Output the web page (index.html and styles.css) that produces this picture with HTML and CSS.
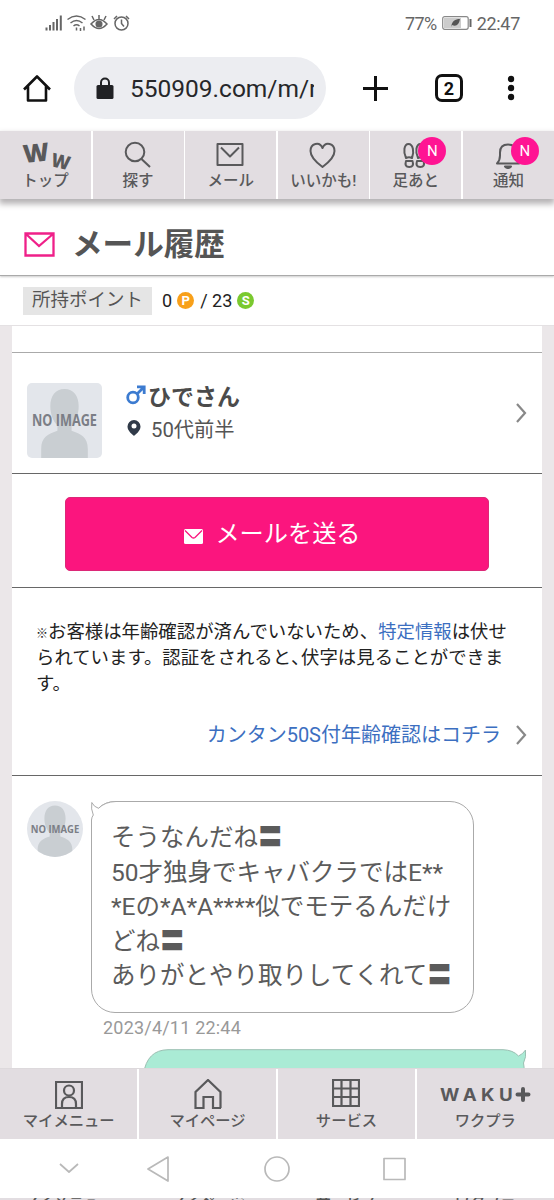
FILE: index.html
```html
<!DOCTYPE html>
<html lang="ja">
<head>
<meta charset="utf-8">
<title>メール履歴</title>
<link rel="stylesheet" href="styles.css">
</head>
<body>
<svg width="0" height="0" class="defs">
  <symbol id="person" viewBox="0 0 74 74">
    <rect width="74" height="74" fill="#e3e6eb"/>
    <path d="M37 6c-9 0-14 7-14 17 0 8 3 15 7 19v5c-9 3-16 6-16 18v9h46v-9c0-12-7-15-16-18v-5c4-4 7-11 7-19 0-10-5-17-14-17z" fill="#c9ced2"/>
    <text x="5" y="42" textLength="64" lengthAdjust="spacingAndGlyphs" class="no-image">NO IMAGE</text>
  </symbol>
</svg>
<div class="phone">
  <header class="status">
    <svg class="signals" width="86" height="18" viewBox="0 0 86 18" fill="none" stroke="#666" stroke-width="1.5">
      <path d="M1.500 13.500v3M5 11v5.500M8.500 8v8.500M12 5v11.500M15.800 1.500v15" stroke-width="2"/>
      <path d="M22.500 5.500q9-7 18 0M25.500 9q6-5 12 0M28.500 12q3-2.500 6 0"/><path d="M31.500 13.500v3M35.500 14v3M39 12.500v4"/>
      <path d="M46 10q8-9 16 0-8 9-16 0zM54 5V1M49 6l-2-4M59 6l2-4"/><circle cx="54" cy="10" r="2.800" fill="#666"/>
      <circle cx="76.500" cy="9.500" r="6.500"/><path d="M76.500 5.500v4l2.500 3M69 5l3-3M84 5l-3-3"/>
    </svg>
    <div class="power"><span class="percent">77%</span>
      <svg width="30" height="14" viewBox="0 0 30 14"><rect x=".7" y=".7" width="25.500" height="12.600" rx="2" fill="#fff" stroke="#888" stroke-width="1.200"/><path d="M2 2h17v10H2z" fill="#ccc"/><path d="M9 11c1-6 4-8 9-8-1 6-4 8-8 6z" fill="#555"/><path d="M28.500 3v8" stroke="#666" stroke-width="2"/></svg>
      <span class="clock">22:47</span></div>
  </header>
  <div class="browser">
    <svg class="home" width="28" height="28" viewBox="0 0 28 28" fill="none" stroke="#111" stroke-width="2.600" stroke-linejoin="round"><path d="M1 15.500L14 2.500 27 15.500M5 12v14.500h18V12"/></svg>
    <div class="address">
      <svg width="18" height="23" viewBox="0 0 18 23"><rect x=".5" y="8" width="17" height="14" rx="1.500" fill="#202124"/><path d="M5 9V5.500a4 4 0 0 1 8 0V9" fill="none" stroke="#202124" stroke-width="2"/></svg>
      <span class="url">550909.com/m/r</span>
    </div>
    <svg class="plus" width="25" height="25" viewBox="0 0 25 25" stroke="#111" stroke-width="3"><path d="M12.500 0v25M0 12.500h25"/></svg>
    <div class="count">2</div>
    <svg class="dots" width="8" height="26" viewBox="0 0 8 26" fill="#111"><circle cx="4" cy="4" r="3.200"/><circle cx="4" cy="13" r="3.200"/><circle cx="4" cy="22" r="3.200"/></svg>
  </div>
  <nav class="tabs">
    <div class="tab"><svg class="ww" viewBox="0 0 50 29"><text transform="translate(3 23) rotate(-6)" font-size="25" textLength="26" lengthAdjust="spacingAndGlyphs">W</text><text transform="translate(29 26) rotate(13)" font-size="19" textLength="19" lengthAdjust="spacingAndGlyphs">W</text></svg><span class="w-top">トップ</span></div>
    <div class="tab"><svg viewBox="0 0 50 29"><circle cx="22" cy="12" r="9.300"/><path d="M28.500 19l8.500 8"/></svg><span>探す</span></div>
    <div class="tab"><svg viewBox="0 0 50 29"><rect x="11.500" y="4" width="25" height="21"/><path d="M15 7.500l9 9 9-9"/></svg><span class="w-mail">メール</span></div>
    <div class="tab"><svg viewBox="0 0 50 29"><path d="M24.500 27C15 20 12.500 15.500 12.500 11c0-7.500 9-10 12-3 3-7 12-4.500 12 3 0 4.500-2.500 9-12 16z"/></svg><span class="w-like">いいかも!</span></div>
    <div class="tab"><svg viewBox="0 0 50 29"><path d="M15 18c-3-6-2-14 2.500-14s6 8 3.500 14q-3-1.500-6 0zM27 18c-3-6-2-14 2.500-14s6 8 3.500 14q-3-1.500-6 0zM15 21h6.500q2 6-3.200 6t-3.300-6zM26 21h6.500q2 6-3.200 6t-3.300-6z"/></svg><span>足あと</span><b class="badge">N</b></div>
    <div class="tab"><svg viewBox="0 0 50 29"><path d="M14 23.500q3-3 3-8v-3q0-8 8-8t8 8v3q0 5 3 8z"/><path d="M22 26.500h6q-3 3-6 0z" fill="#59595b"/></svg><span>通知</span><b class="badge">N</b></div>
  </nav>
  <div class="title">
    <svg width="31" height="25" viewBox="0 0 31 25" fill="none" stroke="#ef2089" stroke-width="2.300"><path d="M1.500 1.500h28v22h-28zM2 2l13 12L29 2"/></svg>
    <h1>メール履歴</h1>
  </div>
  <div class="points"><span class="tag">所持ポイント</span><span>0</span><b class="coin">P</b><span>/ 23</span><b class="coin green">S</b></div>
  <main class="page">
    <div class="sheet">
      <div class="lead"></div>
      <section class="profile">
        <svg class="avatar" viewBox="0 0 74 74"><use href="#person"/></svg>
        <div class="who">
          <div class="name"><svg width="20" height="20" viewBox="0 0 20 20" fill="none" stroke="#3c7bd0" stroke-width="2.800"><circle cx="7" cy="12.500" r="5.300"/><path d="M11 9l7-7M11 1.800h7.200V9"/></svg><strong>ひでさん</strong></div>
          <div class="age"><svg width="16" height="18" viewBox="0 0 15 18"><path d="M7.500 1a6.500 6.500 0 0 1 6.500 6.500C14 12 9 15.500 7.500 17 6 15.500 1 12 1 7.500A6.500 6.500 0 0 1 7.500 1z" fill="#303a49"/><circle cx="7.500" cy="7" r="2.500" fill="#fff"/></svg><span>50代前半</span></div>
        </div>
        <svg class="chevron" viewBox="0 0 12 20"><path d="M2 1l8 9-8 9"/></svg>
      </section>
      <section class="send"><div class="button"><svg width="19" height="15" viewBox="0 0 19 15"><rect width="19" height="15" rx="1.500" fill="#fff"/><path d="M1 1.500l7 7q1.500 1 3 0l7-7" fill="none" stroke="#fb157e" stroke-width="1.300"/></svg><span>メールを送る</span></div></section>
      <section class="notice">
        <p><span class="mark">※</span>お客様は年齢確認が済んでいないため、<a>特定情報</a>は伏せ<br>られています。認証をされると<span class="comma">、</span>伏字は見ることができま<br>す。</p>
        <div class="verify"><a>カンタン50S付年齢確認はコチラ</a><svg class="chevron" viewBox="0 0 12 20"><path d="M2 1l8 9-8 9"/></svg></div>
      </section>
      <section class="chat">
        <svg class="face" viewBox="0 0 74 74"><use href="#person"/></svg>
        <div class="message">
          <div class="bubble"><svg class="tail" width="26" height="27" viewBox="0 0 26 27"><path d="M.5 26V19Q.7 16 2.300 14Q-.3 8 .8 1.500 3 6 7.500 7.300 14 .8 25 .5" fill="#fff" stroke="#aaa"/></svg>そうなんだね〓<br>50才独身でキャバクラではE**<br>*Eの*A*A****似でモテるんだけ<br>どね〓<br>ありがとやり取りしてくれて〓</div>
          <div class="date">2023/4/11 22:44</div>
        </div>
      </section>
      <svg class="reply" viewBox="0 0 384 22"><path d="M.5 25Q4 1 25 .7H360Q370 1 375.500 7 380 5 382.500 1 383.500 8 380.500 14 381 18 382 25" fill="#aaebd5" stroke="#9bbfb2"/></svg>
    </div>
  </main>
  <nav class="bottom">
    <div class="item"><svg viewBox="0 0 28 31"><path d="M1 3h26v26H1z"/><circle cx="14" cy="11.500" r="5"/><path d="M7 29v-4q0-7 7-7t7 7v4"/></svg><span class="w-menu">マイメニュー</span></div>
    <div class="item"><svg viewBox="0 0 28 31"><path d="M27 29h-8V18H9.500v11H1.500V13L14 1l12.500 12v16"/></svg><span class="w-page">マイページ</span></div>
    <div class="item"><svg viewBox="0 0 28 31"><path d="M1 1h26v26H1zM9.500 1v26M18.500 1v26M1 9.500h26M1 18h26"/></svg><span class="w-service">サービス</span></div>
    <div class="item"><svg class="waku" viewBox="0 0 92 31"><g transform="scale(1.100 1)"><text x="1" y="22" textLength="66" lengthAdjust="spacing">WAKU</text></g><path d="M84 10v11M78.500 15.500h11"/></svg><span class="w-plus">ワクプラ</span></div>
  </nav>
  <footer class="keys">
    <svg viewBox="0 0 554 59"><path d="M60 25l9 8 9-8M168 18l-20 12 20 12zM384 19.500h21v21h-21z"/><circle cx="277" cy="30" r="12"/></svg>
  </footer>
  <div class="peek"><span>マイメニュー</span><span>マイページ</span><span>サービス</span><span>ワクプラ</span></div>
</div>
</body>
</html>
```
FILE: styles.css
```css
* { box-sizing: border-box; }
body { margin: 0; background: #fff; font-family: Roboto, "Noto Sans CJK JP", sans-serif; color: #555; }
svg { display: block; flex: none; }
.defs { position: absolute; }
.phone { width: 554px; height: 1200px; overflow: hidden; display: flex; flex-direction: column; }
.phone > * { flex: none; }
.no-image { font: 700 15px "Open Sans", sans-serif; fill: #7b7e86; }

.status { height: 44px; padding: 2px 34px 0 45px; display: flex; align-items: center; justify-content: space-between; }
.power { display: flex; align-items: center; gap: 5px; font-size: 18px; color: #666; }
.percent { letter-spacing: -.6px; }
.clock { letter-spacing: -.3px; }

.browser { height: 87px; padding: 1px 0 0 23px; display: flex; align-items: center; }
.address { width: 252px; height: 62px; margin-left: 23px; padding-left: 22px; border-radius: 31px; background: #ecedf1; display: flex; align-items: center; }
.url { margin-left: 16px; width: 184px; overflow: hidden; white-space: nowrap; font-size: 24.500px; line-height: 34px; padding-top: 2px; color: #26272a; }
.plus { margin-left: 37px; }
.count { margin-left: 47px; width: 28px; height: 28px; border: 3px solid #111; border-radius: 7px; font-weight: 700; font-size: 18px; line-height: 23px; text-align: center; color: #111; }
.dots { margin-left: 44px; }

.tabs { height: 68px; display: grid; grid-template-columns: repeat(6, 1fr); gap: 1.500px; background: #fff; box-shadow: 0 4px 6px 1px #b5b2b4; position: relative; }
.tab { position: relative; background: #e2dde1; display: flex; flex-direction: column; align-items: center; padding-top: 9px; font-weight: 500; font-size: 15.500px; line-height: 25px; white-space: nowrap; color: #59595b; }
.tab svg { width: 50px; height: 29px; fill: none; stroke: #59595b; stroke-width: 2; stroke-linejoin: round; }
.tab .ww { fill: #59595b; stroke: none; font-family: "Open Sans", sans-serif; font-weight: 800; overflow: visible; }
.badge { position: absolute; left: 48px; top: 6px; width: 28px; height: 28px; border-radius: 50%; background: #ff1493; color: #fff; font-weight: 400; font-size: 15px; line-height: 28px; text-align: center; }

.title { height: 77px; padding: 14px 0 0 24px; display: flex; align-items: center; gap: 17px; border-bottom: 1px solid #aaa; box-shadow: 0 1px 2px #ccc; }
.title h1 { margin: 0; font-size: 30.600px; line-height: 44px; padding-top: 1px; font-weight: 700; color: #555; }
.points { height: 49px; padding-left: 23px; display: flex; align-items: center; font-size: 18px; color: #222; }
.tag { width: 129px; height: 28px; margin-right: 10px; background: #e5e5e5; text-align: center; line-height: 27px; font-size: 18.500px; color: #555; }
.coin { width: 17px; height: 17px; border-radius: 50%; margin: 0 6px 0 5px; background: #f8a01a; color: #fff; font-size: 13px; line-height: 17px; text-align: center; }
.green { background: #7ac92f; }

.page { height: 743px; padding: 0 12px; background: #ebe7e9; border-top: 1px solid #e4e1e3; overflow: hidden; }
.sheet { height: 742px; background: #fff; display: flex; flex-direction: column; }
.sheet > * { flex: none; }
.lead { height: 27px; border-bottom: 1.500px solid #aaa; }
.profile { height: 121px; padding: 0 15px; display: flex; align-items: center; border-bottom: 1.500px solid #676767; }
.avatar { width: 75px; height: 75px; border-radius: 5px; margin-top: 15px; }
.who { margin: -3px 0 0 24px; flex: 1; }
.name { display: flex; align-items: center; gap: 2px; height: 33px; font-size: 23px; color: #4b4b4b; }
.age { display: flex; align-items: center; gap: 9px; height: 34px; font-size: 20.300px; }
.chevron { width: 12px; height: 20px; fill: none; stroke: #888; stroke-width: 2.200; }
.send { height: 114px; padding: 23px 53px 0; border-bottom: 1.500px solid #676767; }
.button { height: 74px; padding-right: 9px; border-radius: 5px; background: #fb157e; border: 1px solid #dc2877; display: flex; align-items: center; justify-content: center; gap: 12px; color: #fff; font-size: 24.200px; line-height: 40px; }
.button svg { margin-top: 4px; }
.notice { height: 188px; padding: 31px 15px 0 24px; border-bottom: 1.500px solid #676767; }
.notice p { margin: 0; height: 78px; font-size: 18.400px; line-height: 26px; color: #222; white-space: nowrap; }
.mark { font-size: 12px; line-height: 1; }
.comma { letter-spacing: -8.400px; }
.notice a { color: #3c6fc1; }
.verify { display: flex; justify-content: flex-end; align-items: center; gap: 14px; margin-top: 21px; font-size: 20px; line-height: 34px; }

.chat { display: flex; padding: 25px 0 0 15px; }
.face { width: 56px; height: 56px; border-radius: 50%; }
.message { margin-left: 8px; }
.bubble { position: relative; width: 383px; height: 212px; border: 1.300px solid #aaa; border-radius: 24px; padding: 19px 0 0 19px; font-size: 24.500px; line-height: 34.500px; white-space: nowrap; color: #5b5b5b; }
.tail { position: absolute; left: -1px; top: -1px; }
.date { margin: 3px 0 0 12px; font-size: 18px; line-height: 24px; letter-spacing: .2px; color: #999; }
.reply { width: 384px; height: 22px; margin: 9px 0 0 131px; }

.bottom { height: 71px; display: grid; grid-template-columns: repeat(4, 1fr); gap: 1.500px; background: #fff; border-top: 1px solid #ddd9dc; }
.item { background: #e2dde1; display: flex; flex-direction: column; align-items: center; padding-top: 10px; font-size: 15.300px; font-weight: 500; line-height: 22px; color: #59595b; white-space: nowrap; }
.item svg { width: 28px; height: 31px; fill: none; stroke: #59595b; stroke-width: 2.200; }
.item .waku { width: 92px; stroke-width: 4; stroke-linecap: round; }
.waku text { font: 700 17px Inter, sans-serif; fill: #59595b; stroke: none; }
.keys { height: 59px; background: #fff; }
.keys svg { width: 554px; height: 59px; fill: none; stroke: #b9b9b9; stroke-width: 1.700; stroke-linejoin: round; }
.peek { height: 2px; overflow: hidden; display: grid; grid-template-columns: repeat(4, 1fr); gap: 1.500px; background: #e2dde1; text-align: center; font-size: 15.300px; line-height: 8px; font-weight: 500; }
```
